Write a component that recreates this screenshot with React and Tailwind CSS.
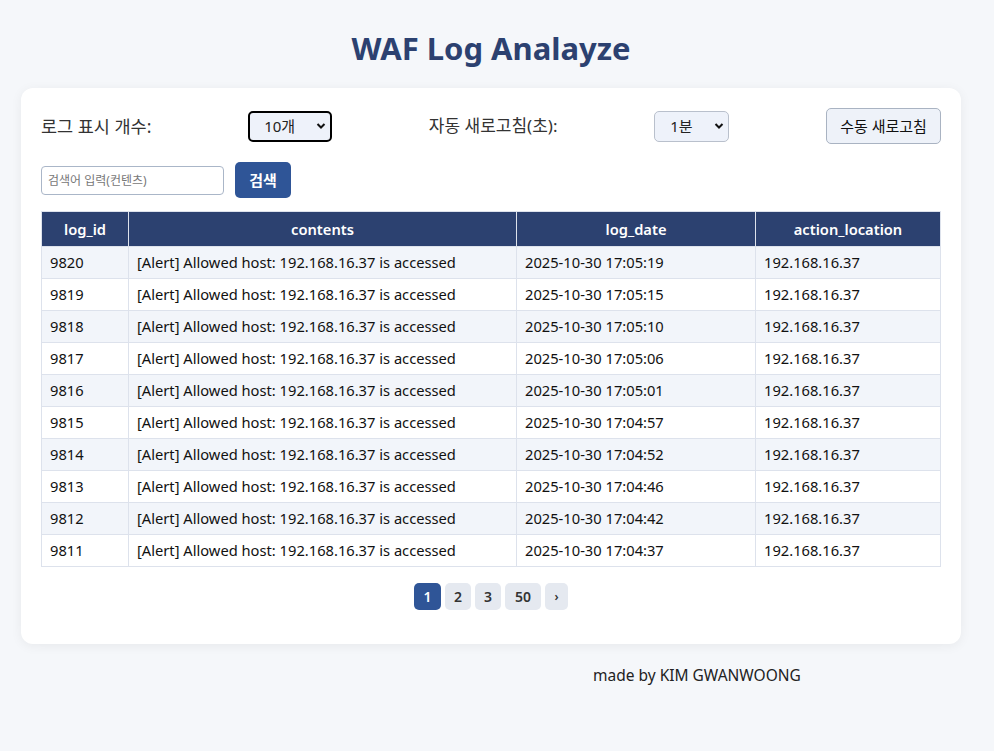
import React from "react";

const rows = [
  [9820, "2025-10-30 17:05:19"],
  [9819, "2025-10-30 17:05:15"],
  [9818, "2025-10-30 17:05:10"],
  [9817, "2025-10-30 17:05:06"],
  [9816, "2025-10-30 17:05:01"],
  [9815, "2025-10-30 17:04:57"],
  [9814, "2025-10-30 17:04:52"],
  [9813, "2025-10-30 17:04:46"],
  [9812, "2025-10-30 17:04:42"],
  [9811, "2025-10-30 17:04:37"],
];

function Chevron() {
  return (
    <svg width="10" height="10" viewBox="0 0 10 10" className="ml-auto">
      <path d="M1.5 3 L5 6.5 L8.5 3" fill="none" stroke="#111" strokeWidth="2" />
    </svg>
  );
}

export default function App() {
  return (
    <div
      className="min-h-[751px] bg-[#f5f7fa] text-[#222]"
      style={{ fontFamily: '"Noto Sans", "Noto Sans CJK KR", sans-serif' }}
    >
      <h1 className="w-[982px] pt-[26px] text-center text-[31px] font-bold leading-[44px] text-[#2c4170]">
        WAF Log Analayze
      </h1>
      <div className="mx-[21px] mt-[18px] w-[940px] rounded-[12px] bg-white px-[20px] pb-[34px] pt-[20px] shadow-[0_2px_12px_rgba(0,0,0,0.06)]">
        <div className="flex h-[36px] items-center justify-between">
          <span className="text-[17.5px] text-[#333]">로그 표시 개수:</span>
          <div className="flex h-[31px] w-[84px] items-center rounded-[5px] border-2 border-black bg-[#eef2fa] pl-[14px] pr-[4px] text-[15px]">
            10개
            <Chevron />
          </div>
          <span className="text-[17px] text-[#333]">자동 새로고침(초):</span>
          <div className="flex h-[31px] w-[75px] items-center rounded-[5px] border border-[#b9c0cc] bg-[#eef2fa] pl-[15px] pr-[4px] text-[15px]">
            1분
            <Chevron />
          </div>
          <button className="h-[36px] w-[115px] rounded-[5px] border border-[#a9b3c2] bg-[#eef2f9] text-[15px] text-[#111]">
            수동 새로고침
          </button>
        </div>
        <div className="mt-[18px] flex items-center gap-[11px]">
          <input
            className="h-[29px] w-[183px] rounded-[4px] border border-[#aab6c8] bg-white px-[6px] text-[12px] text-[#333] placeholder:text-[#777] outline-none"
            placeholder="검색어 입력(컨텐츠)"
          />
          <button className="h-[36px] w-[56px] rounded-[5px] bg-[#2f5597] text-[15px] font-semibold text-white">
            검색
          </button>
        </div>
        <table className="mt-[13px] w-[900px] border-collapse text-[14.7px]">
          <thead>
            <tr className="h-[35px] bg-[#2c4170] text-white">
              <th className="w-[87px] border border-[#dde2ec] font-semibold">log_id</th>
              <th className="w-[388px] border border-[#dde2ec] font-semibold">contents</th>
              <th className="w-[239px] border border-[#dde2ec] font-semibold">log_date</th>
              <th className="border border-[#dde2ec] font-semibold">action_location</th>
            </tr>
          </thead>
          <tbody>
            {rows.map(([id, date], i) => (
              <tr key={id} className={i % 2 === 0 ? "h-[32px] bg-[#f2f5fa]" : "h-[32px] bg-white"}>
                <td className="border border-[#dde2ec] px-[8px] text-[#111]">{id}</td>
                <td className="border border-[#dde2ec] px-[8px] text-[#111]">
                  [Alert] Allowed host: 192.168.16.37 is accessed
                </td>
                <td className="border border-[#dde2ec] px-[8px] text-[#111]">{date}</td>
                <td className="border border-[#dde2ec] px-[8px] text-[#111]">192.168.16.37</td>
              </tr>
            ))}
          </tbody>
        </table>
        <div className="mt-[16px] flex justify-center gap-[4px] text-[14px] font-semibold">
          <span className="flex h-[27px] w-[27px] items-center justify-center rounded-[5px] bg-[#2f5597] text-white">1</span>
          <span className="flex h-[27px] w-[26px] items-center justify-center rounded-[5px] bg-[#e5e9f0] text-[#333]">2</span>
          <span className="flex h-[27px] w-[26px] items-center justify-center rounded-[5px] bg-[#e5e9f0] text-[#333]">3</span>
          <span className="flex h-[27px] w-[36px] items-center justify-center rounded-[5px] bg-[#e5e9f0] text-[#333]">50</span>
          <span className="flex h-[27px] w-[23px] items-center justify-center rounded-[5px] bg-[#e5e9f0] text-[12px] text-[#333]">›</span>
        </div>
      </div>
      <div className="mt-[20px] pl-[593px] text-[15.5px] text-[#222]">made by KIM GWANWOONG</div>
    </div>
  );
}
